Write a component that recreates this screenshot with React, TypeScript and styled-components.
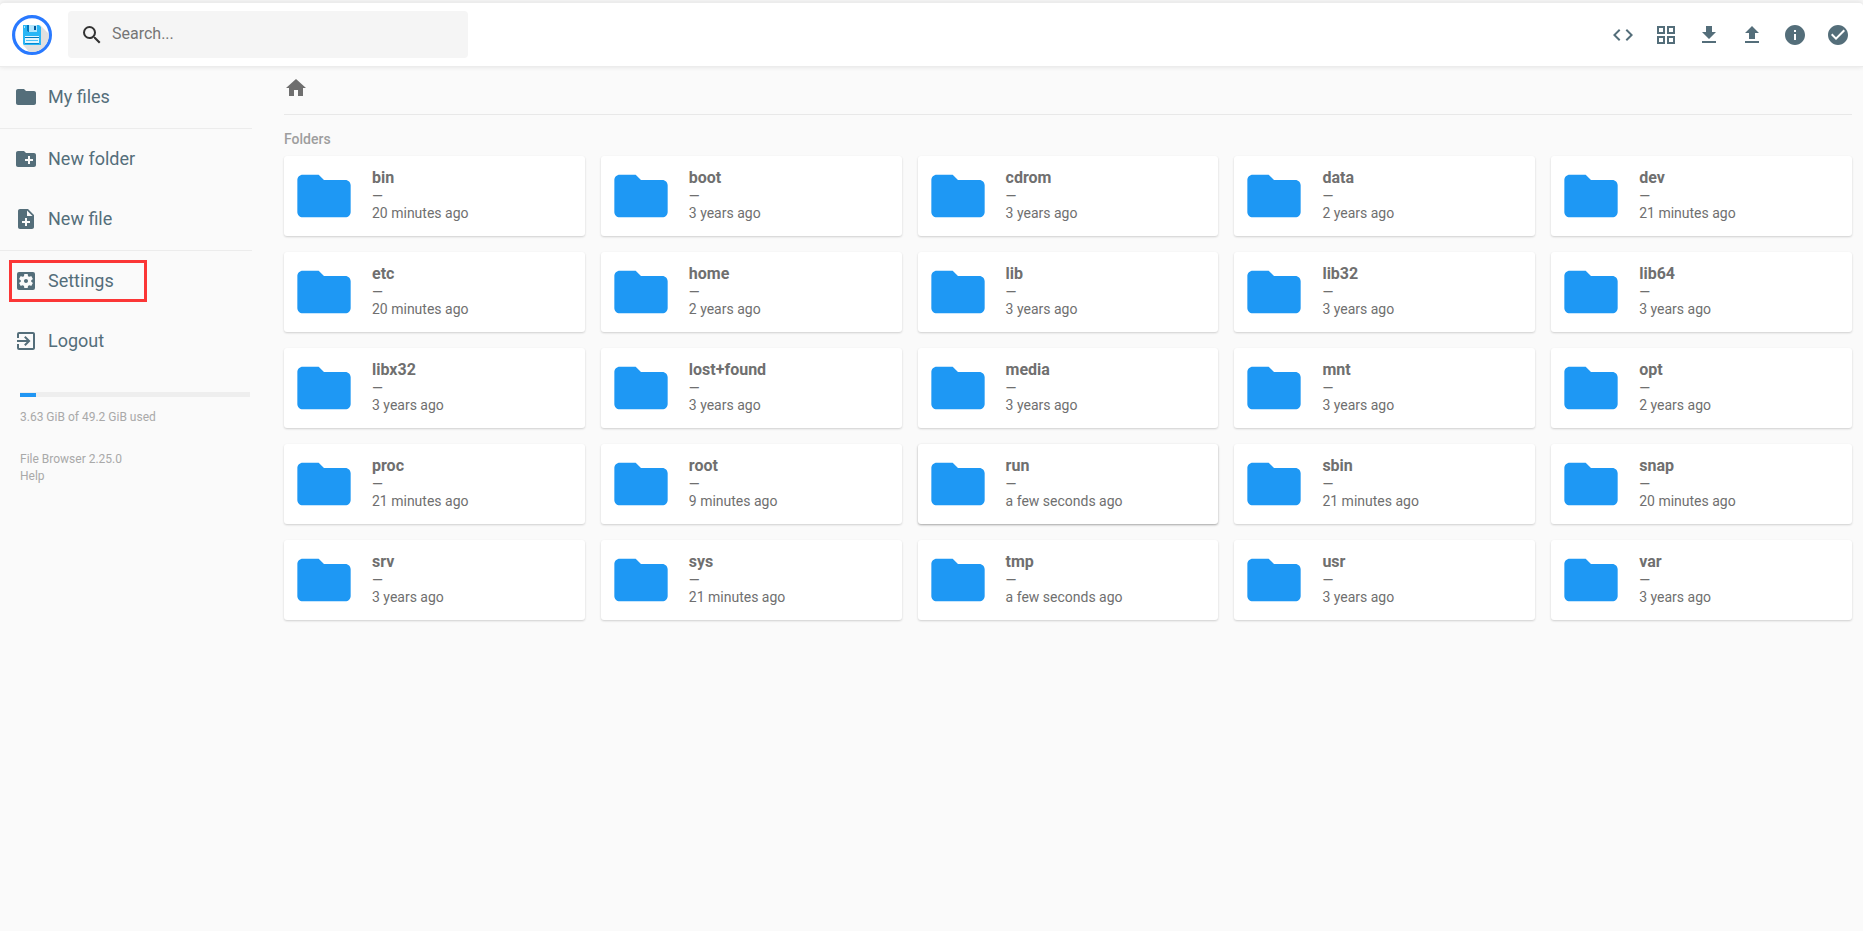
import React from "react";
import styled, { createGlobalStyle } from "styled-components";
import {
  MdCheckCircle,
  MdCode,
  MdCreateNewFolder,
  MdExitToApp,
  MdFileDownload,
  MdFileUpload,
  MdFolder,
  MdGridView,
  MdHome,
  MdInfo,
  MdNoteAdd,
  MdSearch,
  MdSettingsApplications,
} from "react-icons/md";

const GlobalStyle = createGlobalStyle`
  *, *::before, *::after { box-sizing: border-box; }
  body {
    margin: 0;
    background: #fafafa;
    color: #6f6f6f;
    font-family: Roboto, "Liberation Sans", sans-serif;
    font-size: 16px;
  }
  a { color: inherit; text-decoration: none; }
  button { font: inherit; color: inherit; background: none; border: 0; padding: 0; cursor: pointer; }
`;

const Page = styled.div`
  min-height: 100vh;
  border-top: 2px solid #f8f8f8;
`;

const Header = styled.header`
  display: flex;
  align-items: center;
  height: 65px;
  padding: 0 13px 0 12px;
  background: #fff;
  border-top: 1px solid #ececec;
  border-bottom: 1px solid #ececec;
  border-radius: 4px 4px 0 0;
  box-shadow: 0 0 5px rgba(0, 0, 0, 0.1);
`;

const Logo = styled.svg`
  width: 40px;
  height: 40px;
  margin-right: 16px;
  flex: none;
`;

const SearchBox = styled.label`
  display: flex;
  align-items: center;
  gap: 8px;
  width: 400px;
  height: 47px;
  padding: 0 12px;
  border-radius: 4px;
  background: #f5f5f5;
  color: #333;
`;

const SearchInput = styled.input`
  flex: 1;
  min-width: 0;
  border: 0;
  outline: 0;
  padding: 0 0 2px;
  background: transparent;
  font: 16px Roboto, "Liberation Sans", sans-serif;
  &::placeholder { color: #757575; opacity: 1; }
`;

const Actions = styled.div`
  display: flex;
  gap: 19px;
  margin-left: auto;
  color: #546e7a;
`;

const IconButton = styled.button`
  display: flex;
`;

const Body = styled.div`
  display: flex;
`;

const Sidebar = styled.nav`
  flex: none;
  width: 252px;
  color: #546e7a;
`;

const Section = styled.div`
  padding-bottom: 1px;
  & + & { border-top: 1px solid #ececec; }
`;

const NavItem = styled.button`
  display: flex;
  align-items: center;
  width: 100%;
  height: 60px;
  padding: 0 9px;
`;

const NavFrame = styled.span<{ $marked?: boolean }>`
  display: flex;
  align-items: center;
  gap: 10px;
  width: 138px;
  height: 42px;
  padding: 0 2px;
  border: 3px solid ${(p) => (p.$marked ? "#fb3636" : "transparent")};
  font-size: 18px;
  line-height: 24px;
`;

const Usage = styled.div`
  margin: 20px 2px 0 20px;
  color: #a9a9a9;
  font-size: 12px;
  line-height: 17px;
`;

const Track = styled.div`
  height: 5px;
  margin-bottom: 12px;
  padding-top: 1px;
  background: #eee;
`;

const Fill = styled.div`
  height: 4px;
  background: #2196f3;
`;

const Credits = styled.div`
  display: flex;
  flex-direction: column;
  align-items: flex-start;
  margin-top: 25px;
`;

const Main = styled.main`
  flex: 1;
  min-width: 0;
  padding: 0 11px 16px 32px;
`;

const Breadcrumbs = styled.div`
  display: flex;
  height: 48px;
  padding-top: 9px;
  border-bottom: 1px solid #e8e8e8;
`;

const Heading = styled.h2`
  margin: 16px 0 8px;
  color: #9e9e9e;
  font-size: 14px;
  font-weight: 500;
  line-height: 17px;
`;

const Grid = styled.div`
  display: grid;
  grid-template-columns: repeat(5, minmax(0, 1fr));
  gap: 16px;
`;

const Card = styled.a<{ $hovered?: boolean }>`
  display: flex;
  align-items: center;
  gap: 16px;
  height: 80px;
  padding: 0 8px;
  border-radius: 3px;
  background: #fff;
  box-shadow: ${(p) =>
    p.$hovered
      ? "0 1px 3px rgba(0, 0, 0, 0.12), 0 1px 2px rgba(0, 0, 0, 0.24)"
      : "0 1px 3px rgba(0, 0, 0, 0.06), 0 1px 2px rgba(0, 0, 0, 0.12)"};
`;

const FolderIcon = styled(MdFolder)`
  flex: none;
  color: #1e98f4;
`;

const Details = styled.div`
  display: flex;
  flex-direction: column;
  padding-bottom: 2px;
  font-size: 14px;
  line-height: 16px;
`;

const Name = styled.span`
  font-size: 16px;
  font-weight: 700;
  line-height: 20px;
`;

const Modified = styled.time`
  line-height: 18px;
`;

const folders: [string, string][] = [
  ["bin", "20 minutes ago"],
  ["boot", "3 years ago"],
  ["cdrom", "3 years ago"],
  ["data", "2 years ago"],
  ["dev", "21 minutes ago"],
  ["etc", "20 minutes ago"],
  ["home", "2 years ago"],
  ["lib", "3 years ago"],
  ["lib32", "3 years ago"],
  ["lib64", "3 years ago"],
  ["libx32", "3 years ago"],
  ["lost+found", "3 years ago"],
  ["media", "3 years ago"],
  ["mnt", "3 years ago"],
  ["opt", "2 years ago"],
  ["proc", "21 minutes ago"],
  ["root", "9 minutes ago"],
  ["run", "a few seconds ago"],
  ["sbin", "21 minutes ago"],
  ["snap", "20 minutes ago"],
  ["srv", "3 years ago"],
  ["sys", "21 minutes ago"],
  ["tmp", "a few seconds ago"],
  ["usr", "3 years ago"],
  ["var", "3 years ago"],
];

const actions = [
  { label: "Toggle shell", Icon: MdCode },
  { label: "Switch view", Icon: MdGridView },
  { label: "Download", Icon: MdFileDownload },
  { label: "Upload", Icon: MdFileUpload },
  { label: "Info", Icon: MdInfo },
  { label: "Select multiple", Icon: MdCheckCircle },
];

const sections: { label: string; Icon: typeof MdFolder; marked?: boolean }[][] = [
  [{ label: "My files", Icon: MdFolder }],
  [
    { label: "New folder", Icon: MdCreateNewFolder },
    { label: "New file", Icon: MdNoteAdd },
  ],
  [
    { label: "Settings", Icon: MdSettingsApplications, marked: true },
    { label: "Logout", Icon: MdExitToApp },
  ],
];

function BrandLogo() {
  return (
    <Logo viewBox="0 0 40 40" role="img" aria-label="File Browser">
      <defs>
        <clipPath id="disc">
          <circle cx="20" cy="20" r="17" />
        </clipPath>
      </defs>
      <circle cx="20" cy="20" r="18.4" fill="#fff" stroke="#2979ff" strokeWidth="3.2" />
      <path d="M28 10l12 12v18H20l-9-10z" fill="#e0e0e0" clipPath="url(#disc)" />
      <path d="M11 10h16l2 2v18H12l-1-1z" fill="#29b6f6" />
      <path d="M15 10h10v7H16l-1-1z" fill="#b3e5fc" />
      <path d="M15 10h2v7h-1l-1-1z" fill="#0277bd" />
      <path d="M22 11h2v4h-2z" fill="#01579b" />
      <path d="M12 11h1v2h-1z" fill="#b3e5fc" />
      <path d="M13 21h14v7H13z" fill="#e1f5fe" />
      <path d="M13 22h14v1H13z" fill="#0277bd" />
      <path d="M14 25h12v1H14z" fill="#4fc3f7" />
      <path d="M13 28h14v1H13z" fill="#0288d1" />
    </Logo>
  );
}

export default function App() {
  const usedPercent = Math.round((3.63 / 49.2) * 100);
  return (
    <Page>
      <GlobalStyle />
      <Header>
        <BrandLogo />
        <SearchBox>
          <MdSearch size={24} />
          <SearchInput type="text" placeholder="Search..." aria-label="Search" />
        </SearchBox>
        <Actions>
          {actions.map(({ label, Icon }) => (
            <IconButton key={label} type="button" aria-label={label}>
              <Icon size={24} />
            </IconButton>
          ))}
        </Actions>
      </Header>
      <Body>
        <Sidebar>
          {sections.map((items) => (
            <Section key={items[0].label}>
              {items.map(({ label, Icon, marked }) => (
                <NavItem key={label} type="button">
                  <NavFrame $marked={marked}>
                    <Icon size={24} />
                    {label}
                  </NavFrame>
                </NavItem>
              ))}
            </Section>
          ))}
          <Usage>
            <Track role="progressbar" aria-label="Disk usage" aria-valuenow={usedPercent}>
              <Fill style={{ width: `${usedPercent}%` }} />
            </Track>
            3.63 GiB of 49.2 GiB used
            <Credits>
              <a href="#about">File Browser 2.25.0</a>
              <a href="#help">Help</a>
            </Credits>
          </Usage>
        </Sidebar>
        <Main>
          <Breadcrumbs>
            <a href="#home" aria-label="Home">
              <MdHome size={24} />
            </a>
          </Breadcrumbs>
          <Heading>Folders</Heading>
          <Grid>
            {folders.map(([name, modified]) => (
              <Card key={name} href={`#${name}`} $hovered={name === "run"}>
                <FolderIcon size={64} />
                <Details>
                  <Name>{name}</Name>
                  <span>—</span>
                  <Modified>{modified}</Modified>
                </Details>
              </Card>
            ))}
          </Grid>
        </Main>
      </Body>
    </Page>
  );
}
